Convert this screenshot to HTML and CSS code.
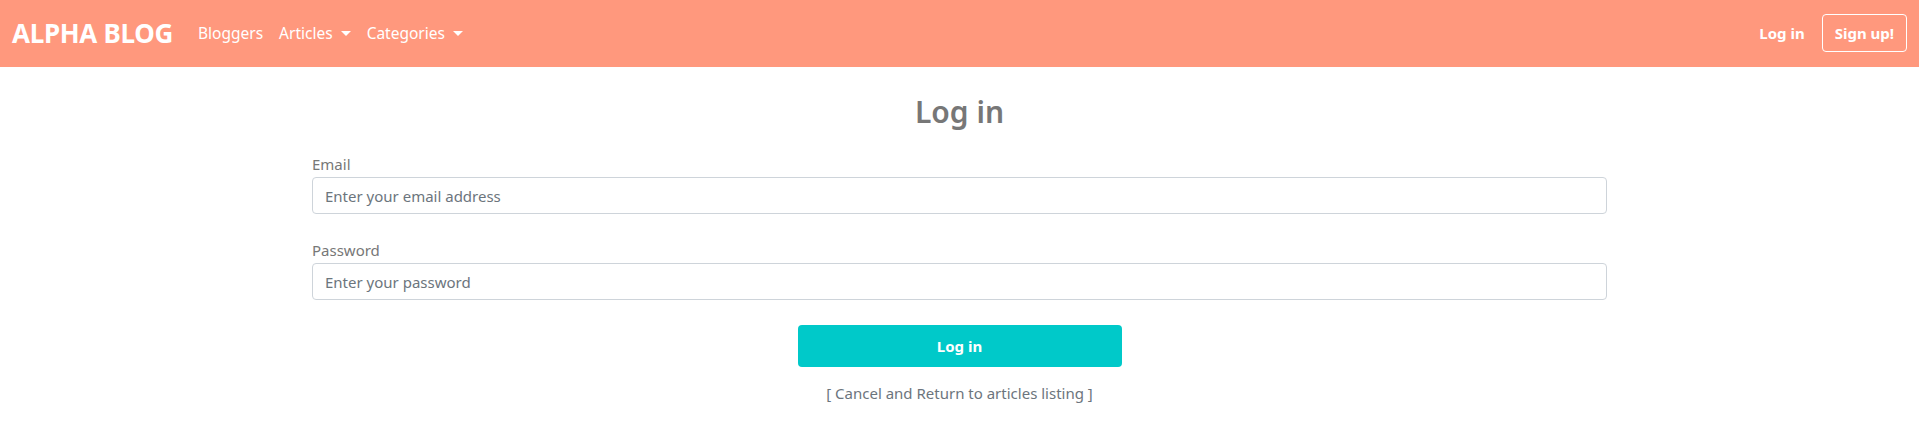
FILE: index.html
```html
<!DOCTYPE html>
<html lang="en">
<head>
<meta charset="utf-8">
<title>Alpha Blog - Log in</title>
<link rel="stylesheet" href="styles.css">
</head>
<body>
<nav class="navbar">
  <div class="nav-left">
    <a class="brand" href="#">ALPHA BLOG</a>
    <a class="nav-link" href="#">Bloggers</a>
    <a class="nav-link dropdown" href="#">Articles<span class="caret"></span></a>
    <a class="nav-link dropdown" href="#">Categories<span class="caret"></span></a>
  </div>
  <div class="nav-right">
    <a class="nav-link strong" href="#">Log in</a>
    <a class="signup" href="#">Sign up!</a>
  </div>
</nav>
<main class="page">
  <h1 class="title">Log in</h1>
  <form class="form">
    <div class="field">
      <label class="label" for="email">Email</label>
      <input class="input" id="email" type="email" placeholder="Enter your email address">
    </div>
    <div class="field">
      <label class="label" for="password">Password</label>
      <input class="input" id="password" type="password" placeholder="Enter your password">
    </div>
    <div class="actions">
      <button class="btn" type="button">Log in</button>
      <a class="cancel" href="#">[ Cancel and Return to articles listing ]</a>
    </div>
  </form>
</main>
</body>
</html>
```
FILE: styles.css
```css
* { box-sizing: border-box; }
html, body { margin: 0; padding: 0; }
body {
  font-family: "Noto Sans", "Open Sans", sans-serif;
  font-size: 15px;
  color: #777;
  background: #fff;
}
a { text-decoration: none; }

.navbar {
  height: 67px;
  background: #ff987d;
  display: flex;
  align-items: center;
  justify-content: space-between;
  padding: 0 12px 1px;
}
.nav-left, .nav-right { display: flex; align-items: center; }
.brand {
  color: #fff;
  font-weight: 700;
  font-size: 26px;
  letter-spacing: -0.3px;
  margin-right: 17px;
}
.nav-link {
  color: #fff;
  font-size: 15.5px;
  padding: 0 8px;
  display: flex;
  align-items: center;
}
.nav-link.strong { font-weight: 700; font-size: 15px; margin-right: 9px; }
.caret {
  display: inline-block;
  margin-left: 8px;
  border-top: 5px solid #fff;
  border-left: 5px solid transparent;
  border-right: 5px solid transparent;
}
.signup {
  color: #fff;
  font-weight: 700;
  font-size: 15px;
  border: 1px solid #fff;
  border-radius: 4px;
  height: 38px;
  padding: 0 12px;
  display: flex;
  align-items: center;
}

.page {
  display: flex;
  flex-direction: column;
  align-items: center;
}
.title {
  margin: 25px 0 0;
  font-size: 30px;
  line-height: 40px;
  font-weight: 600;
  color: #777;
}
.form {
  width: 1295px;
  margin-top: 21px;
  display: flex;
  flex-direction: column;
}
.field { display: flex; flex-direction: column; margin-bottom: 25px; }
.label {
  font-size: 15px;
  line-height: 22px;
  margin-bottom: 2px;
  color: #777;
}
.input {
  height: 37px;
  border: 1px solid #ced4da;
  border-radius: 4px;
  padding: 0 12px;
  font-family: inherit;
  font-size: 15px;
  color: #495057;
}
.input::placeholder { color: #6c757d; opacity: 1; }
.actions {
  display: flex;
  flex-direction: column;
  align-items: center;
}
.btn {
  width: 324px;
  height: 42px;
  background: #00c9c9;
  border: 0;
  border-radius: 4px;
  color: #fff;
  font-family: inherit;
  font-weight: 700;
  font-size: 15px;
}
.cancel {
  margin-top: 15px;
  color: #6c757d;
  font-size: 15px;
  line-height: 22px;
}
```
